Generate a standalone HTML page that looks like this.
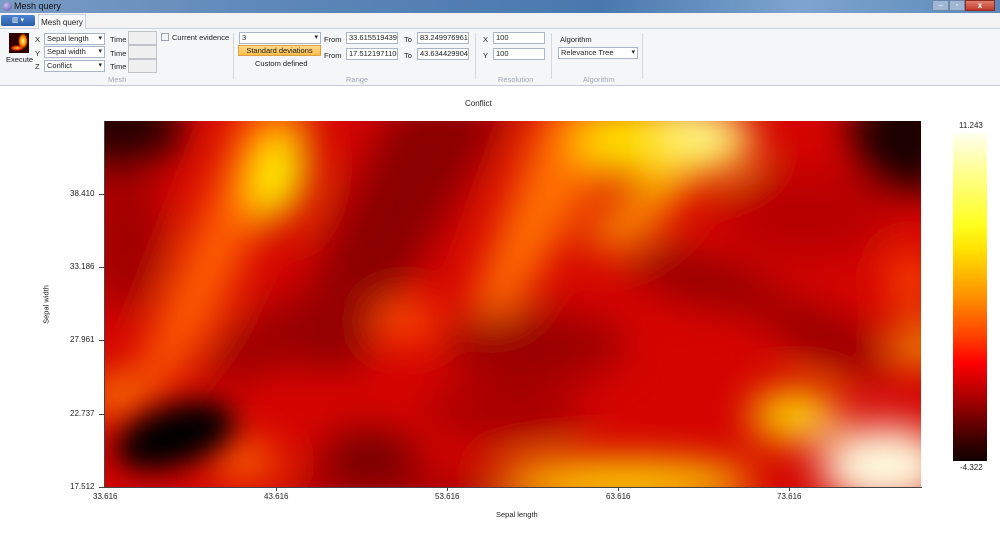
<!DOCTYPE html>
<html><head><meta charset="utf-8">
<style>
*{box-sizing:border-box;margin:0;padding:0}
body{width:1000px;height:537px;overflow:hidden;background:#fff;font-family:"Liberation Sans",sans-serif;font-size:8px;color:#222;position:relative}
.abs{position:absolute}
.title{left:0;top:0;width:1000px;height:13px;background:linear-gradient(90deg,#7a9cc4 0%,#5b86b8 30%,#4a78ae 60%,#7ea5cf 80%,#5c88b8 100%)}
.tabrow{left:0;top:13px;width:1000px;height:16px;background:#f3f3f3;border-bottom:1px solid #c9d2de}
.ribbon{left:0;top:29px;width:1000px;height:57px;background:#f5f6f7;border-bottom:1px solid #c5ccd6}
.inp{position:absolute;height:12px;background:#fff;border:1px solid #aab6c6;font-size:7.5px;line-height:10px;padding-left:2px;white-space:nowrap;overflow:hidden}
.dd:after{content:"▾";position:absolute;right:2px;top:0;font-size:7px}
.lbl{position:absolute;font-size:7.5px;white-space:nowrap}
.glbl{position:absolute;font-size:7.5px;color:#a0a8b4;top:75px}
.sep{position:absolute;top:33px;width:1px;height:46px;background:#d4d9e0}
.time{position:absolute;width:29px;height:14px;background:#f0f0f0;border:1px solid #c0c4c8}
.tick{position:absolute;font-size:8px;color:#222}
</style></head><body>
<div class="abs title"></div>
<div class="abs" style="left:3px;top:2px;width:9px;height:9px;border-radius:50%;background:radial-gradient(circle at 35% 35%,#c8c0f0,#5b4aa0)"></div>
<div class="abs" style="left:14px;top:1px;font-size:9px;color:#111">Mesh query</div>
<div class="abs" style="left:932px;top:0;width:17px;height:11px;background:#9fb7d4;border:1px solid #6b86a8;color:#fff;font-size:8px;text-align:center;line-height:9px">–</div>
<div class="abs" style="left:949px;top:0;width:16px;height:11px;background:#9fb7d4;border:1px solid #6b86a8;color:#fff;font-size:7px;text-align:center;line-height:9px">▫</div>
<div class="abs" style="left:965px;top:0;width:30px;height:11px;background:linear-gradient(#e08070,#c0392b);border:1px solid #8a2a20;color:#fff;font-size:8px;text-align:center;line-height:9px;font-weight:bold">x</div>
<div class="abs tabrow"></div>
<div class="abs" style="left:1px;top:15px;width:34px;height:11px;background:linear-gradient(#4c82d0,#2a5ea8);border-radius:2px;color:#fff;font-size:7px;text-align:center;line-height:11px">▥ ▾</div>
<div class="abs" style="left:38px;top:14px;width:48px;height:16px;background:#f8f8f8;border:1px solid #c9d2de;border-bottom:none;font-size:8px;text-align:center;line-height:15px">Mesh query</div>
<div class="abs ribbon"></div>
<div class="abs" style="left:9px;top:33px;width:20px;height:20px;background:radial-gradient(ellipse 5px 8px at 14px 8px,#ffff80,#ff8000 60%,transparent 100%),radial-gradient(ellipse 7px 3px at 8px 15px,#ffd040,#e02000 70%,transparent 100%),#300000"></div>
<div class="lbl" style="left:6px;top:55px">Execute</div>
<div class="lbl" style="left:35px;top:35px">X</div><div class="lbl" style="left:35px;top:49px">Y</div><div class="lbl" style="left:35px;top:62px">Z</div>
<div class="inp dd" style="left:44px;top:33px;width:61px">Sepal length</div>
<div class="inp dd" style="left:44px;top:46px;width:61px">Sepal width</div>
<div class="inp dd" style="left:44px;top:60px;width:61px">Conflict</div>
<div class="lbl" style="left:110px;top:35px">Time</div><div class="lbl" style="left:110px;top:49px">Time</div><div class="lbl" style="left:110px;top:62px">Time</div>
<div class="time" style="left:128px;top:31px"></div><div class="time" style="left:128px;top:45px"></div><div class="time" style="left:128px;top:59px"></div>
<div class="abs" style="left:161px;top:33px;width:8px;height:8px;border:1px solid #9aa6b6;background:#f4f6fa"></div>
<div class="lbl" style="left:172px;top:33px">Current evidence</div>
<div class="glbl" style="left:108px">Mesh</div>
<div class="sep" style="left:233px"></div>
<div class="inp dd" style="left:239px;top:32px;width:82px">3</div>
<div class="abs" style="left:238px;top:45px;width:83px;height:11px;background:linear-gradient(#ffd88a,#fbbd4c);border:1px solid #e0a040;font-size:7.5px;text-align:center;line-height:10px">Standard deviations</div>
<div class="lbl" style="left:255px;top:59px">Custom defined</div>
<div class="lbl" style="left:324px;top:35px">From</div><div class="lbl" style="left:324px;top:51px">From</div>
<div class="inp" style="left:346px;top:32px;width:52px">33.61551943922</div>
<div class="inp" style="left:346px;top:48px;width:52px">17.51219711063</div>
<div class="lbl" style="left:404px;top:35px">To</div><div class="lbl" style="left:404px;top:51px">To</div>
<div class="inp" style="left:417px;top:32px;width:52px">83.24997696152</div>
<div class="inp" style="left:417px;top:48px;width:52px">43.63442990489</div>
<div class="glbl" style="left:346px">Range</div>
<div class="sep" style="left:475px"></div>
<div class="lbl" style="left:483px;top:35px">X</div><div class="lbl" style="left:483px;top:51px">Y</div>
<div class="inp" style="left:493px;top:32px;width:52px">100</div>
<div class="inp" style="left:493px;top:48px;width:52px">100</div>
<div class="glbl" style="left:498px">Resolution</div>
<div class="sep" style="left:551px"></div>
<div class="lbl" style="left:560px;top:35px">Algorithm</div>
<div class="inp dd" style="left:558px;top:47px;width:80px">Relevance Tree</div>
<div class="glbl" style="left:583px">Algorithm</div>
<div class="sep" style="left:642px"></div>

<div class="abs" style="left:465px;top:99px;font-size:8px">Conflict</div>

<svg class="abs" style="left:105px;top:121px" width="816" height="366" viewBox="0 0 816 366">
<defs>
<filter id="b" x="-20%" y="-20%" width="140%" height="140%"><feGaussianBlur stdDeviation="20"/></filter>
<filter id="b2" x="-50%" y="-50%" width="200%" height="200%"><feGaussianBlur stdDeviation="14"/></filter>
<clipPath id="c"><rect width="816" height="366"/></clipPath>
</defs>
<g clip-path="url(#c)">
<rect width="816" height="366" fill="#d40400"/>
<g filter="url(#b)">
<ellipse cx="10" cy="5" rx="70" ry="45" fill="#2a0000"/>
<ellipse cx="20" cy="120" rx="40" ry="70" fill="#a00000"/>
<path d="M140 -20 L210 -20 L110 200 L50 280 L30 260 Z" fill="#ff6000"/>
<ellipse cx="175" cy="55" rx="24" ry="45" fill="#ffff00" transform="rotate(15 175 55)"/>
<path d="M290 -20 L410 -20 L250 250 L170 240 Z" fill="#8a0000"/>
<path d="M440 -20 L550 -20 L400 200 L365 190 Z" fill="#ff7000"/>
<ellipse cx="560" cy="20" rx="90" ry="40" fill="#ffe000"/>
<ellipse cx="600" cy="10" rx="40" ry="22" fill="#ffff90"/>
<ellipse cx="530" cy="95" rx="55" ry="20" fill="#ff9a00" transform="rotate(-35 530 95)"/>
<ellipse cx="800" cy="15" rx="55" ry="60" fill="#1a0000"/>
<ellipse cx="700" cy="95" rx="80" ry="45" fill="#b80000"/>
<ellipse cx="600" cy="160" rx="80" ry="22" fill="#900000" transform="rotate(15 600 160)"/>
<ellipse cx="720" cy="215" rx="70" ry="22" fill="#900000" transform="rotate(25 720 215)"/>
<ellipse cx="430" cy="225" rx="90" ry="35" fill="#9a0000"/>
<ellipse cx="300" cy="200" rx="35" ry="22" fill="#ff4a00"/>
<ellipse cx="180" cy="210" rx="90" ry="28" fill="#980000" transform="rotate(-30 180 210)"/>
<ellipse cx="815" cy="225" rx="22" ry="18" fill="#ffd000"/>
<ellipse cx="805" cy="160" rx="20" ry="30" fill="#ff5000"/>
<ellipse cx="10" cy="275" rx="30" ry="20" fill="#ff8000"/>
<ellipse cx="140" cy="340" rx="35" ry="18" fill="#ff7000"/>
<ellipse cx="265" cy="340" rx="50" ry="30" fill="#700000"/>
<ellipse cx="400" cy="290" rx="80" ry="30" fill="#a80000"/>
<ellipse cx="520" cy="362" rx="130" ry="22" fill="#ffe000"/>
<ellipse cx="690" cy="295" rx="45" ry="25" fill="#ffe000"/>
<ellipse cx="780" cy="345" rx="65" ry="40" fill="#fffce0"/>
<ellipse cx="300" cy="372" rx="120" ry="15" fill="#a00000"/>
</g>
<g filter="url(#b2)">
<ellipse cx="70" cy="315" rx="62" ry="30" fill="#000" transform="rotate(-18 70 315)"/>
</g>
</g>
</svg>

<div class="abs" style="left:104px;top:121px;width:1px;height:367px;background:#444"></div>
<div class="abs" style="left:104px;top:487px;width:818px;height:1px;background:#444"></div>
<div class="abs" style="left:99px;top:194px;width:6px;height:1px;background:#444"></div>
<div class="abs" style="left:99px;top:267px;width:6px;height:1px;background:#444"></div>
<div class="abs" style="left:99px;top:340px;width:6px;height:1px;background:#444"></div>
<div class="abs" style="left:99px;top:414px;width:6px;height:1px;background:#444"></div>
<div class="abs" style="left:99px;top:487px;width:6px;height:1px;background:#444"></div>
<div class="tick" style="left:70px;top:189px">38.410</div>
<div class="tick" style="left:70px;top:262px">33.186</div>
<div class="tick" style="left:70px;top:335px">27.961</div>
<div class="tick" style="left:70px;top:409px">22.737</div>
<div class="tick" style="left:70px;top:482px">17.512</div>
<div class="abs" style="left:276px;top:487px;width:1px;height:4px;background:#444"></div>
<div class="abs" style="left:447px;top:487px;width:1px;height:4px;background:#444"></div>
<div class="abs" style="left:618px;top:487px;width:1px;height:4px;background:#444"></div>
<div class="abs" style="left:789px;top:487px;width:1px;height:4px;background:#444"></div>
<div class="tick" style="left:93px;top:492px">33.616</div>
<div class="tick" style="left:264px;top:492px">43.616</div>
<div class="tick" style="left:435px;top:492px">53.616</div>
<div class="tick" style="left:606px;top:492px">63.616</div>
<div class="tick" style="left:777px;top:492px">73.616</div>
<div class="abs" style="left:496px;top:510px;font-size:7.5px">Sepal length</div>
<div class="abs" style="left:18px;top:300px;font-size:7.5px;transform:rotate(-90deg);width:56px;text-align:center">Sepal width</div>

<div class="abs" style="left:953px;top:133px;width:34px;height:328px;background:linear-gradient(#fffff0 0%,#ffff90 12%,#ffff20 28%,#ffe000 36%,#ff9000 50%,#ff4000 62%,#ff0000 70%,#a00000 82%,#400000 93%,#100000 100%)"></div>
<div class="abs" style="left:959px;top:121px;font-size:8px">11.243</div>
<div class="abs" style="left:960px;top:463px;font-size:8px">-4.322</div>
</body></html>
